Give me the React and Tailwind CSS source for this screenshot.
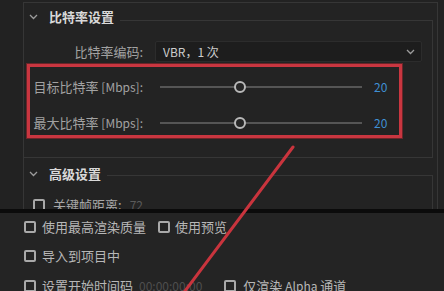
import React from "react";

const FONT = { fontFamily: '"Noto Sans CJK SC", "Noto Sans", sans-serif' };

function Chevron({ className = "" }) {
  return (
    <svg width="9" height="6" viewBox="0 0 9 6" className={className}>
      <path d="M1 1 L4.5 4.5 L8 1" fill="none" stroke="#9c9c9c" strokeWidth="1.3" />
    </svg>
  );
}

function Box({ className = "" }) {
  return <div className={`w-[12px] h-[12px] shrink-0 rounded-[2px] border-2 border-[#a9a9a9] ${className}`} />;
}

function SliderRow({ label }) {
  return (
    <div className="flex items-center h-[24px]">
      <div className="w-[113px] text-right whitespace-nowrap text-[13px] text-[#a2a2a2]">
        {label} <span className="text-[12px]">[Mbps]:</span>
      </div>
      <div className="relative ml-[17px] w-[202px] h-[2px] bg-[#555555]">
        <div className="absolute left-[74px] top-[-5px] w-[12px] h-[12px] rounded-full border-2 border-[#b9b9b9] bg-[#262626]" />
      </div>
      <div className="ml-[12px] text-[12px] text-[#3f8fd4]">20</div>
    </div>
  );
}

function Header({ title, lineTop }) {
  return (
    <div className="flex h-[28px] items-center">
      <Chevron className="ml-[5px]" />
      <div className="ml-[11px] text-[13px] font-bold text-[#d9d9d9]">{title}</div>
      <div className={`flex-1 self-stretch ml-[6px] border-t border-r border-[#363636] ${lineTop}`} />
    </div>
  );
}

export default function App() {
  return (
    <div className="relative w-[444px] h-[291px] overflow-hidden bg-[#232323]" style={FONT}>
      {/* upper settings panel */}
      <div className="flex h-[209px] overflow-hidden bg-[#222222]">
        <div className="w-[23px] shrink-0" />
        <div className="flex-1 mt-[2px] mr-[6px] border-l border-t border-r border-[#363636] bg-[#232323]">
          <div className="mr-[4px]">
            <Header title="比特率设置" lineTop="mt-[17px]" />
            <div className="border-r border-b border-[#363636] pt-[10px] pb-[19px]">
              <div className="flex items-center h-[21px]">
                <div className="w-[119px] text-right text-[13px] text-[#a2a2a2]">比特率编码:</div>
                <div className="ml-[12px] w-[267px] h-[21px] flex items-center justify-between rounded-[2px] border border-[#2c2c2c] bg-[#1d1d1d] pl-[7px] pr-[6px]">
                  <span className="text-[12px] text-[#cdcdcd]">VBR，1 次</span>
                  <Chevron />
                </div>
              </div>
              <div className="ml-[3px] mt-[2px] w-[375px] border-[3px] border-[#c93640] shadow-[0_0_0_1px_#6a2529] pt-[8px] flex flex-col gap-[12px]">
                <SliderRow label="目标比特率" />
                <SliderRow label="最大比特率" />
              </div>
            </div>
            <div className="mt-[2px]">
              <Header title="高级设置" lineTop="mt-[15px]" />
              <div className="border-r border-[#363636] pt-[7px] h-[60px]">
                <div className="flex items-center h-[20px] pl-[9px] gap-[8px]">
                  <Box />
                  <span className="text-[13px] text-[#a8a8a8]">关键帧距离:</span>
                  <span className="text-[12px] text-[#5a5a5a]">72</span>
                </div>
              </div>
            </div>
          </div>
        </div>
      </div>

      <div className="h-[4px] bg-[#0b0b0b]" />

      {/* lower options */}
      <div className="h-[78px] bg-[#242424] pl-[24px] pt-[4px] text-[13px] text-[#b7b7b7]">
        <div className="flex items-center h-[20px]">
          <Box />
          <span className="ml-[6px]">使用最高渲染质量</span>
          <Box className="ml-[12px]" />
          <span className="ml-[5px]">使用预览</span>
        </div>
        <div className="flex items-center h-[20px] mt-[9px]">
          <Box />
          <span className="ml-[6px]">导入到项目中</span>
        </div>
        <div className="flex items-center h-[20px] mt-[10px]">
          <Box />
          <span className="ml-[6px]">设置开始时间码</span>
          <span className="ml-[6px] text-[12px] text-[#4e4e4e]">00:00:00:00</span>
          <Box className="ml-[22px]" />
          <span className="ml-[7px]">
            仅渲染 <span className="text-[12px]">Alpha</span> 通道
          </span>
        </div>
      </div>

      {/* annotation line */}
      <svg className="absolute inset-0 pointer-events-none" width="444" height="291">
        <line x1="293" y1="147" x2="182" y2="295" stroke="#c9343d" strokeWidth="3" strokeLinecap="round" />
      </svg>
    </div>
  );
}
